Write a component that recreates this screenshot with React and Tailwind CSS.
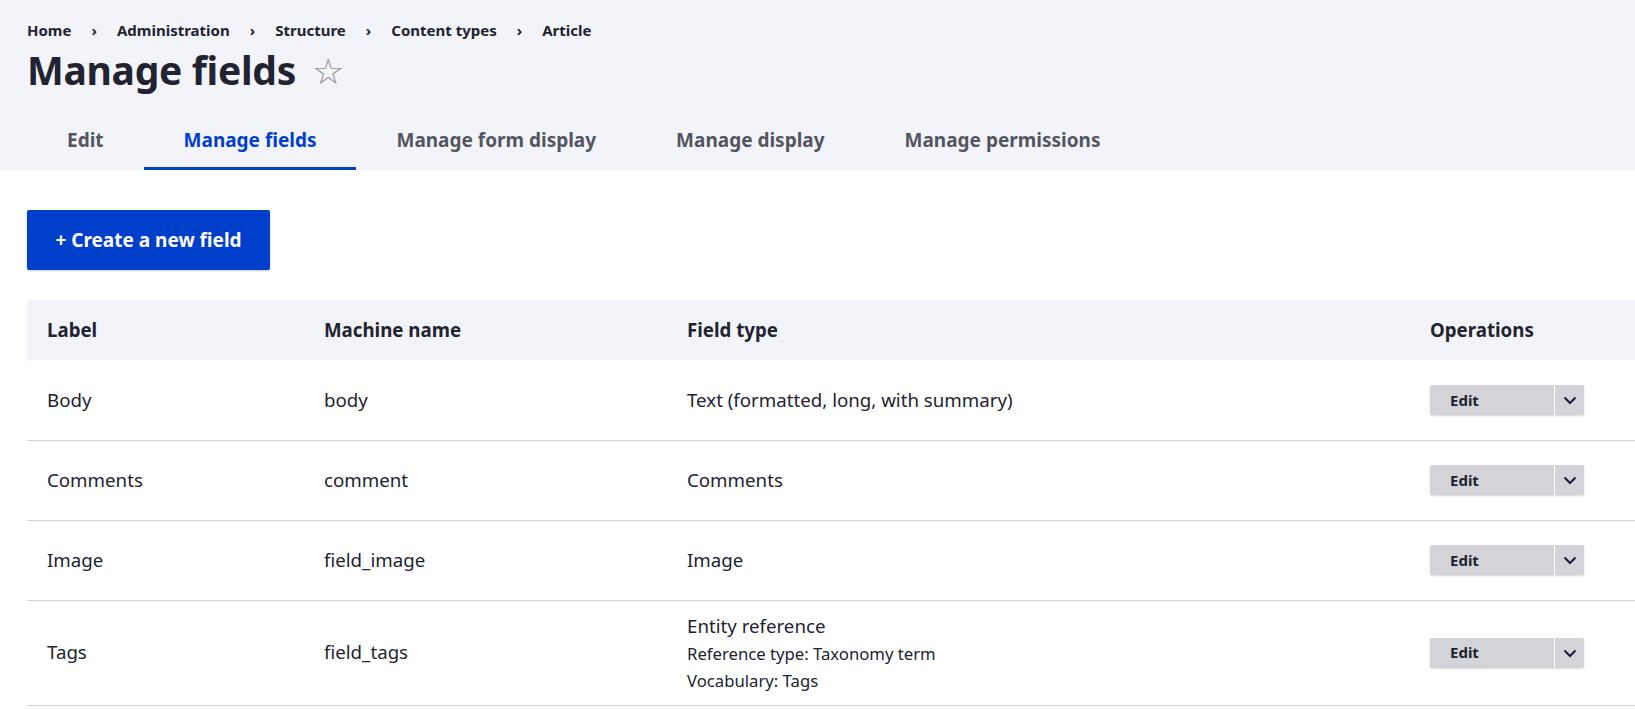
import { useState } from 'react';

const crumbs = ['Home', 'Administration', 'Structure', 'Content types', 'Article'];
const tabs = ['Edit', 'Manage fields', 'Manage form display', 'Manage display', 'Manage permissions'];

const fields = [
  { label: 'Body', machine: 'body', type: 'Text (formatted, long, with summary)' },
  { label: 'Comments', machine: 'comment', type: 'Comments' },
  { label: 'Image', machine: 'field_image', type: 'Image' },
  {
    label: 'Tags',
    machine: 'field_tags',
    type: 'Entity reference',
    details: ['Reference type: Taxonomy term', 'Vocabulary: Tags'],
  },
];

const Chevron = () => (
  <svg className="w-[14px] h-[14px]" viewBox="0 0 14 14" fill="none" stroke="#1a1d3b" strokeWidth={2}>
    <path d="M1.5 4.5L7 10l5.5-5.5" />
  </svg>
);

const App = () => {
  const [active, setActive] = useState('Manage fields');

  return (
    <div className="min-h-screen bg-white text-[#222330] font-['Segoe_UI','Noto_Sans',sans-serif] overflow-hidden">
      {/* Header */}
      <div className="bg-[#f3f4f9] h-[170px] pl-[27px] flex flex-col">
        <nav className="h-[20px] mt-[20px] flex items-center text-[15px] font-bold">
          {crumbs.map((c, i) => (
            <div key={c} className="flex items-center">
              {i > 0 && <span className="px-[20px]">›</span>}
              <span>{c}</span>
            </div>
          ))}
        </nav>
        <div className="h-[46px] mt-[6px] flex items-center gap-[16px]">
          <h1 className="text-[39px] font-bold leading-none tracking-[-0.3px]">Manage fields</h1>
          <span className="text-[36px] leading-none text-[#8e929c] mt-[4px]">☆</span>
        </div>
        <div className="mt-auto flex">
          {tabs.map((t) => (
            <button
              key={t}
              onClick={() => setActive(t)}
              className={`h-[62px] pt-[6px] px-[40px] text-[19px] font-bold border-b-[3px] ${
                active === t ? 'text-[#003ecc] border-[#003ecc]' : 'text-[#545560] border-transparent'
              }`}
            >
              {t}
            </button>
          ))}
        </div>
      </div>

      {/* Content */}
      <div className="pl-[27px] pt-[40px]">
        <button className="h-[60px] w-[243px] bg-[#003ecc] text-white text-[19px] font-bold rounded-[2px] shadow-[0_1px_2px_rgba(0,0,0,0.2)]">
          + Create a new field
        </button>

        <table className="mt-[30px] w-full border-collapse text-[18.7px]">
          <thead>
            <tr className="bg-[#f3f4f9] h-[60px] text-left">
              <th className="w-[277px] pl-[20px] font-bold">Label</th>
              <th className="w-[363px] pl-[20px] font-bold">Machine name</th>
              <th className="w-[743px] pl-[20px] font-bold">Field type</th>
              <th className="pl-[20px] font-bold">Operations</th>
            </tr>
          </thead>
          <tbody>
            {fields.map((f) => (
              <tr key={f.label} className={`border-b border-[#d3d4d9] ${f.details ? 'h-[105px]' : 'h-[80px]'}`}>
                <td className="pl-[20px]">{f.label}</td>
                <td className="pl-[20px]">{f.machine}</td>
                <td className="pl-[20px]">
                  <div className="leading-[28px]">{f.type}</div>
                  {f.details &&
                    f.details.map((d) => (
                      <div key={d} className="text-[16.7px] leading-[27px]">
                        {d}
                      </div>
                    ))}
                </td>
                <td className="pl-[20px]">
                  <div className="flex w-[154px] h-[30px] bg-[#d3d4d9] rounded-[2px] shadow-[0_1px_2px_rgba(0,0,0,0.15)]">
                    <button className="flex-1 text-left pl-[20px] text-[15px] font-bold text-[#222330]">Edit</button>
                    <div className="w-px bg-white" />
                    <button className="w-[29px] flex items-center justify-center">
                      <Chevron />
                    </button>
                  </div>
                </td>
              </tr>
            ))}
          </tbody>
        </table>
      </div>
    </div>
  );
};

export default App;
